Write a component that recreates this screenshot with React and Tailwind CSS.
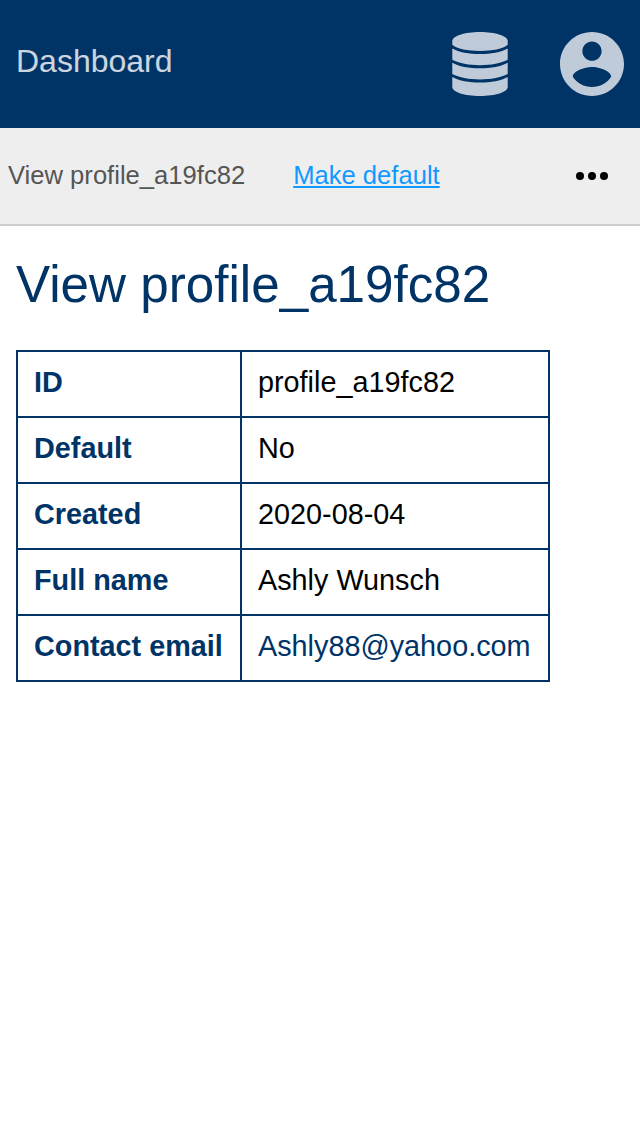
import React from "react";

const rows = [
  ["ID", "profile_a19fc82"],
  ["Default", "No"],
  ["Created", "2020-08-04"],
  ["Full name", "Ashly Wunsch"],
  ["Contact email", "Ashly88@yahoo.com"],
];

function DatabaseIcon() {
  return (
    <svg className="h-16 w-16" viewBox="0 0 64 64" fill="currentColor" aria-hidden="true">
      <path d="M4.3 9C4.3 4 16.5 0 32 0s27.700 4 27.700 9v3.700C55 16.900 44.500 18.900 32 18.900S9 16.900 4.300 12.700z" />
      <path d="M4.300 16.400C11 20.200 21 22 32 22S53 20.200 59.700 16.400V27.800C53 31.400 43 33.200 32 33.200S11 31.400 4.300 27.800z" />
      <path d="M4.300 30.700C11 34.500 21 36.300 32 36.300S53 34.500 59.700 30.700V42.100C53 45.700 43 47.500 32 47.500S11 45.700 4.300 42.100z" />
      <path d="M4.300 45C11 48.800 21 50.600 32 50.600S53 48.800 59.700 45V55C59.700 60 47.500 64 32 64S4.300 60 4.300 55z" />
    </svg>
  );
}

function AccountIcon() {
  return (
    <svg className="h-16 w-16" viewBox="2 2 20 20" fill="currentColor" aria-hidden="true">
      <path d="M12 2C6.480 2 2 6.480 2 12s4.480 10 10 10 10-4.480 10-10S17.520 2 12 2zm0 3c1.660 0 3 1.340 3 3s-1.340 3-3 3-3-1.340-3-3 1.340-3 3-3zm0 14.200c-2.500 0-4.710-1.280-6-3.220.03-1.990 4-3.080 6-3.080 1.990 0 5.970 1.090 6 3.080-1.290 1.940-3.500 3.220-6 3.220z" />
    </svg>
  );
}

export default function App() {
  return (
    <div className="min-h-screen bg-white font-['Liberation_Sans',Arial,sans-serif] text-black">
      <header className="flex h-32 items-center justify-between bg-[#003366] px-4">
        <a href="#" className="pb-1.5 text-[32px] leading-[38px] text-white/80">Dashboard</a>
        <nav className="flex items-center gap-12 text-white/75">
          <a href="#" aria-label="Data"><DatabaseIcon /></a>
          <a href="#" aria-label="Account"><AccountIcon /></a>
        </nav>
      </header>
      <nav className="flex h-[98px] items-center justify-between border-b-2 border-[#cccccc] bg-[#eeeeee] pl-2 pr-8 text-[25.6px] leading-[30px]">
        <div className="flex gap-12 pb-0.5">
          <span className="text-[#555555]">View profile_a19fc82</span>
          <a href="#" className="text-[#1199ff] underline">Make default</a>
        </div>
        <button aria-label="More" className="flex">
          <svg className="h-8 w-8" viewBox="0 0 32 32" fill="black"><circle cx="4" cy="16" r="4" /><circle cx="16" cy="16" r="4" /><circle cx="28" cy="16" r="4" /></svg>
        </button>
      </nav>
      <main className="px-4 pt-[29px]">
        <h1 className="text-[51.2px] leading-[60px] text-[#003366]">View profile_a19fc82</h1>
        <table className="mt-[35px] w-[534px] table-fixed border-collapse text-[28.8px] leading-8">
          <colgroup>
            <col className="w-[224px]" />
            <col className="w-[308px]" />
          </colgroup>
          <tbody>
            {rows.map(([label, value]) => (
              <tr key={label}>
                <th className="h-[66px] border-2 border-[#003366] px-4 pb-1 pt-0 text-left font-bold text-[#003366]">{label}</th>
                <td className="h-[66px] border-2 border-[#003366] px-4 pb-1 pt-0">
                  {label === "Contact email" ? <a href="mailto:Ashly88@yahoo.com" className="text-[#003366]">{value}</a> : value}
                </td>
              </tr>
            ))}
          </tbody>
        </table>
      </main>
    </div>
  );
}
